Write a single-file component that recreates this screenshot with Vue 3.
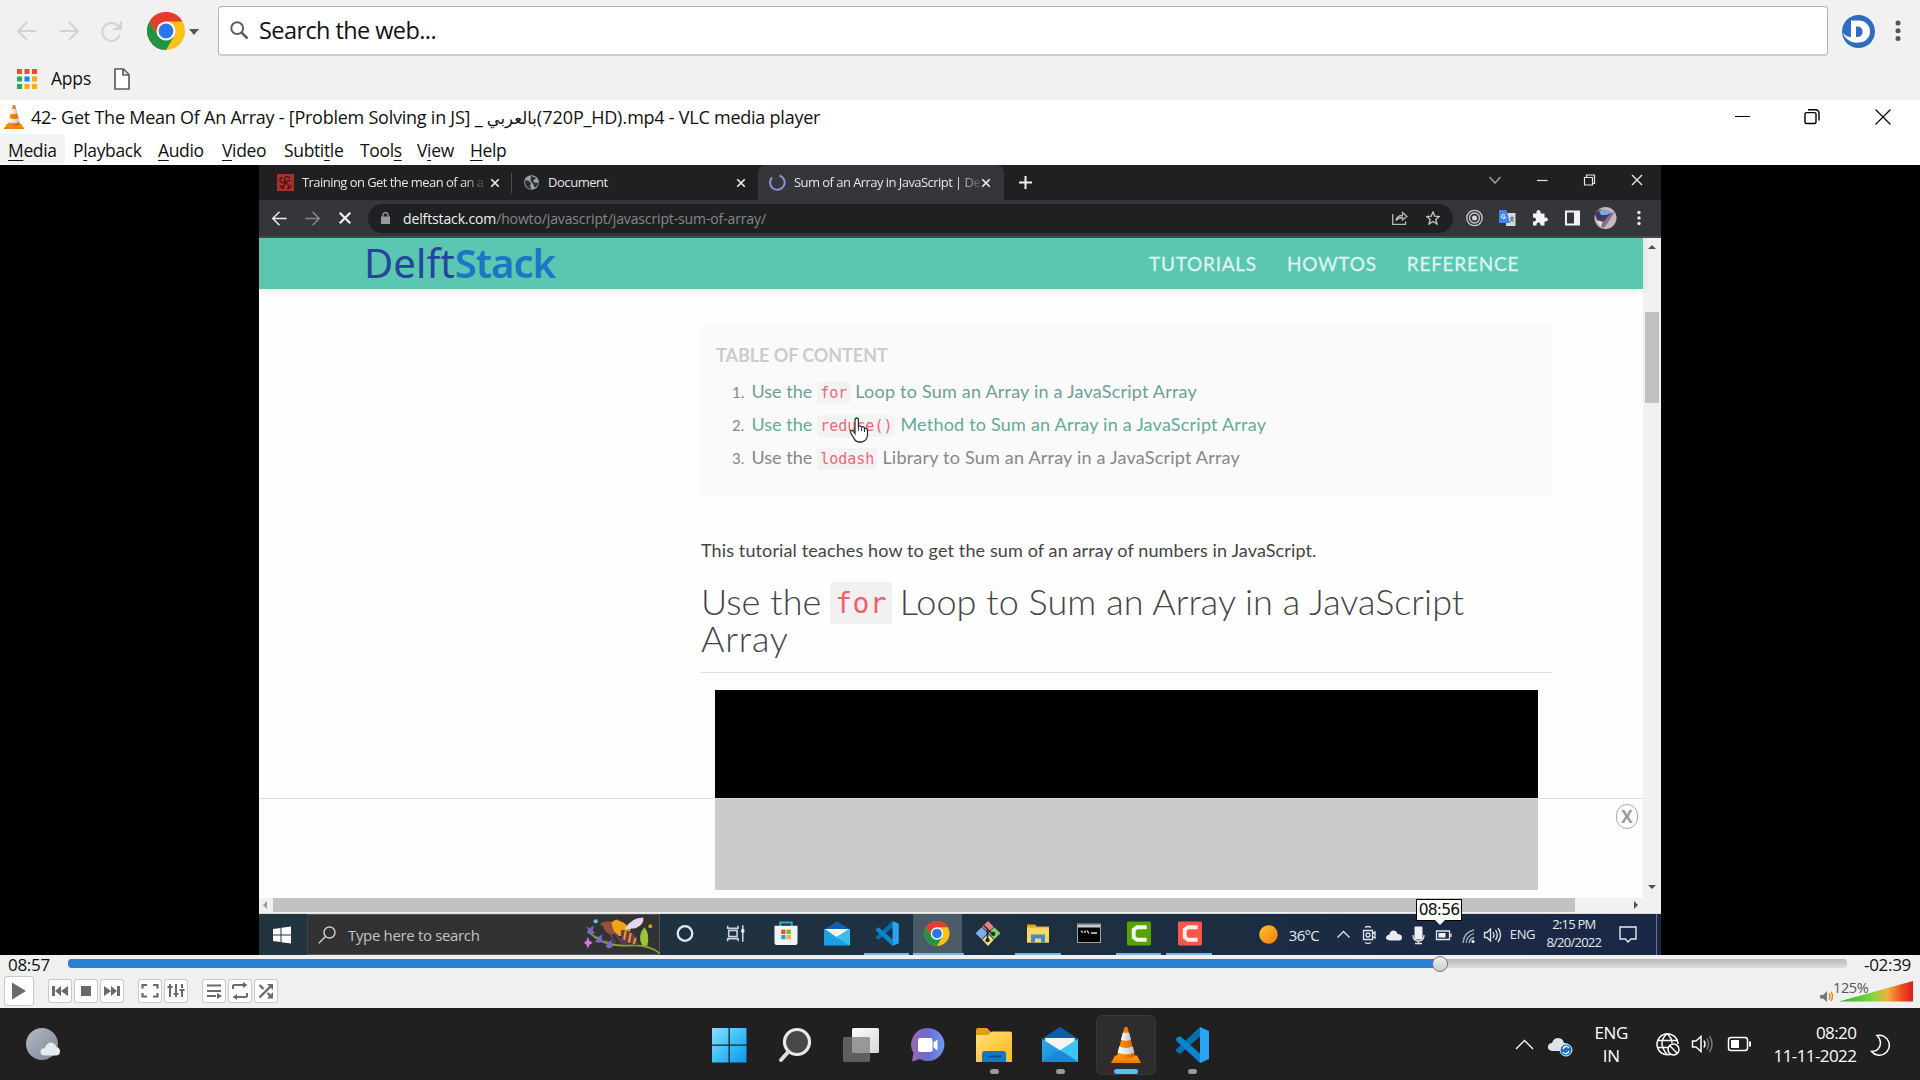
<script setup>
const menus = [
  ['', 'M', 'edia', 65], ['P', 'l', 'ayback', 85], ['', 'A', 'udio', 64], ['', 'V', 'ideo', 62],
  ['Subti', 't', 'le', 76], ['Tool', 's', '', 57], ['V', 'i', 'ew', 53], ['', 'H', 'elp', 60]
]
const toc = [
  { n: 1, code: 'for', tail: 'Loop to Sum an Array in a JavaScript Array', tone: 'seen' },
  { n: 2, code: 'reduce()', tail: 'Method to Sum an Array in a JavaScript Array', tone: 'hot' },
  { n: 3, code: 'lodash', tail: 'Library to Sum an Array in a JavaScript Array', tone: 'plain' }
]
const winApps = [
  { id: 'cortana' }, { id: 'tview' }, { id: 'store' }, { id: 'mail10' }, { id: 'vscode', on: 1 },
  { id: 'chrome', on: 1, active: 1 }, { id: 'git' }, { id: 'files10', on: 1 }, { id: 'cmd' },
  { id: 'camgreen', on: 1 }, { id: 'camred', on: 1 }
]
const dockApps = [
  { id: 'win11' }, { id: 'search11' }, { id: 'tview11' }, { id: 'chat' },
  { id: 'files11', on: 1 }, { id: 'mail11', on: 1 }, { id: 'cone', on: 1, active: 1 }, { id: 'vscode', on: 1 }
]
const played = 77.2
</script>

<template>
  <div class="screen">
    <svg class="defs" width="0" height="0" aria-hidden="true">
      <defs>
        <linearGradient id="gOrange" x1="0" x2="1"><stop offset="0" stop-color="#ff9a1f" /><stop offset=".5" stop-color="#f57c00" /><stop offset="1" stop-color="#d95f00" /></linearGradient>
        <linearGradient id="gWhite" x1="0" x2="1"><stop offset="0" stop-color="#fff" /><stop offset="1" stop-color="#bfc3c7" /></linearGradient>
        <linearGradient id="gWin" x1="0" y1="0" x2="1" y2="1" ><stop offset="0" stop-color="#8be0ff" /><stop offset=".5" stop-color="#3cc0fa" /><stop offset="1" stop-color="#0f94ee" /></linearGradient>
        <linearGradient id="gFold" x1="0" y1="0" x2="1" y2="1"><stop offset="0" stop-color="#ffe07a" /><stop offset="1" stop-color="#fbb91a" /></linearGradient>
        <linearGradient id="gChat" x1="0" y1="0" x2="1" y2="0"><stop offset="0" stop-color="#9a68b8" /><stop offset=".5" stop-color="#6b6bd0" /><stop offset="1" stop-color="#6f9aef" /></linearGradient>
        <linearGradient id="gMail" x1="0" y1="0" x2="1" y2="1"><stop offset="0" stop-color="#2fa9e6" /><stop offset="1" stop-color="#0f86dc" /></linearGradient>
        <linearGradient id="gMoon" x1="0" y1="0" x2="1" y2="1"><stop offset="0" stop-color="#b3bcc8" /><stop offset="1" stop-color="#7c848e" /></linearGradient>
        <linearGradient id="gSun" x1="0" y1="0" x2="1" y2="1"><stop offset="0" stop-color="#ffc62b" /><stop offset="1" stop-color="#ee7a10" /></linearGradient>
        <linearGradient id="gVol" x1="0" x2="1"><stop offset="0" stop-color="#2fae3a" /><stop offset=".45" stop-color="#7fd63e" /><stop offset=".65" stop-color="#f0b23c" /><stop offset=".85" stop-color="#ee4a22" /><stop offset="1" stop-color="#d8201c" /></linearGradient>
        <linearGradient id="gTv" x1="0" y1="0" x2="1" y2="1"><stop offset="0" stop-color="#fff" /><stop offset="1" stop-color="#d6d6d6" /></linearGradient>
      </defs>
      <symbol id="chrome" viewBox="0 0 38 38">
        <circle cx="19" cy="19" r="19" fill="#fbc116" />
        <path d="M2.500 9.500A19 19 0 0 1 35.500 9.500H19L10.800 23.700Z" fill="#e33b2e" />
        <path d="M2.500 9.500A19 19 0 0 0 19 38L27.200 23.700H10.800Z" fill="#229342" />
        <circle cx="19" cy="19" r="9.500" fill="#fff" /><circle cx="19" cy="19" r="7.400" fill="#2b76ee" />
      </symbol>
      <symbol id="cone" viewBox="0 0 28 34">
        <path d="M3.500 27H24.500L28 34H0Z" fill="#ff8f00" /><path d="M1 31.500H27L28 34H0Z" fill="#f57c00" />
        <path d="M12.600 0H15.400L22.500 27.500Q14 33 5.500 27.500Z" fill="url(#gOrange)" />
        <path d="M10.900 5.500H17.100L18.700 12Q14 14 9.300 12Z" fill="url(#gWhite)" />
        <path d="M7.600 18.500Q14 21 20.400 18.500L21.900 24Q14 28 6.100 24Z" fill="url(#gWhite)" />
      </symbol>
      <symbol id="vscode" viewBox="0 0 34 36">
        <path d="M25 9.500 5 27 1 24.500V22.500L25 0Z" fill="#0270ad" />
        <path d="M25 26.500 5 9 1 11.500V13.500L25 36Z" fill="#0a86d1" />
        <path d="M25 0 34 4V32L25 36Z" fill="#27a5f2" />
      </symbol>
      <symbol id="mail11" viewBox="0 0 34 34">
        <path d="M0 11 17 0 34 11V16H0Z" fill="#0a5cad" /><path d="M3 10.500H31V20L17 24 3 20Z" fill="#f4f4f4" />
        <path d="M0 11 34 33H0Z" fill="url(#gMail)" /><path d="M34 11V33L17 22Z" fill="#3cc4f2" /><path d="M0 33 17 22 34 33Z" fill="#1788dc" />
      </symbol>
      <symbol id="mail10" viewBox="0 0 26 24">
        <path d="M0 8 13 0 26 8Z" fill="#1260b4" /><path d="M0 7.500H26V24H0Z" fill="#1ba0e8" />
        <path d="M1 7.500H25L13 16Z" fill="#f5f5f0" /><path d="M26 7.500V24L12 15.500Z" fill="#37bff2" />
      </symbol>
      <symbol id="cortana" viewBox="0 0 24 24"><circle cx="12" cy="12" r="7" fill="none" stroke="#e3ebf0" stroke-width="2.200" /></symbol>
      <symbol id="tview" viewBox="0 0 24 24"><path d="M4 4.500V7H14V4.500M4 19.500V17H14V19.500M5 9H13V15H5ZM18.500 4V20" fill="none" stroke="#cdd5da" stroke-width="1.500" /><path d="M17 8h3v3h-3z" fill="#fff" /></symbol>
      <symbol id="store" viewBox="0 0 26 26"><path d="M7 7V1.500H19V7" fill="none" stroke="#2ea8e0" stroke-width="2" /><path d="M1 5H25V22Q25 25 22 25H4Q1 25 1 22Z" fill="#f3f3f3" /><path d="M8 9h4.500v4.500H8z" fill="#f04f24" /><path d="M13.500 9H18v4.500h-4.500z" fill="#78b818" /><path d="M8 14.500h4.500V19H8z" fill="#22a2e8" /><path d="M13.500 14.500H18V19h-4.500z" fill="#f5b50f" /></symbol>
      <symbol id="git" viewBox="0 0 26 26">
        <path d="M13 0 19 6 13 12 7 6Z" fill="#ee7f80" /><path d="M6.500 6.500 12.500 12.500 6.500 19 0 12.800Z" fill="#84a9ee" /><path d="M19.500 6.500 26 12.800 19.500 19 13.500 12.500Z" fill="#85cf62" /><path d="M13 13.500 19 19.500 13 26 7 19.500Z" fill="#f6dd80" />
        <path d="M9 5 18 14M12.500 9V20" stroke="#1c2b38" stroke-width="1.600" /><circle cx="12.500" cy="20" r="2.200" fill="#1c2b38" /><circle cx="18.500" cy="13.500" r="2.200" fill="#1c2b38" />
      </symbol>
      <symbol id="files10" viewBox="0 0 26 24"><path d="M2 3H10L12 5H24V21H2Z" fill="#e0a420" /><path d="M2 6H24V21H2Z" fill="#f9d765" /><path d="M6 13H20V21H16V17H10V21H6Z" fill="#3f8cc8" /></symbol>
      <symbol id="cmd" viewBox="0 0 26 24"><rect x="1.500" y="2.500" width="23" height="18.500" fill="#000" stroke="#9ba3a8" /><path d="M2 3H24V6H2Z" fill="#c9cdd0" /><path d="M5 9.500 7 11M9 9v2.500M11 9l2 3M15 11.500h6" stroke="#ddd" stroke-width="1.300" fill="none" /></symbol>
      <symbol id="camgreen" viewBox="0 0 26 26"><rect x=".5" y=".5" width="25" height="25" rx="1.500" fill="#57a300" /><path d="M21 6.500H11L7.500 9V17L11 19.500H21" fill="none" stroke="#f2f9ea" stroke-width="4" /></symbol>
      <symbol id="camred" viewBox="0 0 26 26"><rect x=".5" y=".5" width="25" height="25" rx="1.500" fill="#f8574a" /><path d="M21 6.500H11L7.500 9V17L11 19.500H21" fill="none" stroke="#fff0ee" stroke-width="4" /></symbol>
      <symbol id="win11" viewBox="0 0 36 36"><path d="M1 1H17.500V17.500H1ZM18.800 1H35.500V17.500H18.800ZM1 18.800H17.500V35.500H1ZM18.800 18.800H35.500V35.500H18.800Z" fill="url(#gWin)" /></symbol>
      <symbol id="search11" viewBox="0 0 34 36"><circle cx="19" cy="15" r="12.500" fill="#474747" stroke="#e9e9e9" stroke-width="3.200" /><path d="M10.500 24.500 3 33" stroke="#dcdcdc" stroke-width="4" stroke-linecap="round" /></symbol>
      <symbol id="tview11" viewBox="0 0 36 36"><rect x="9" y="1" width="27" height="25" rx="1.500" fill="url(#gTv)" /><rect x="0" y="10" width="27" height="25" rx="1.500" fill="#777" fill-opacity=".72" /></symbol>
      <symbol id="chat" viewBox="0 0 34 36"><path d="M17 1A16.500 16.500 0 1 1 9 32L1 34.500 2.500 26A16.500 16.500 0 0 1 17 1Z" fill="url(#gChat)" /><rect x="7" y="11" width="14.500" height="14" rx="2" fill="#fff" /><path d="M22.500 15.500 26.500 12.500V23.500L22.500 20.500Z" fill="#fff" /></symbol>
      <symbol id="files11" viewBox="0 0 36 34"><path d="M0 2Q0 0 2 0H11L15 4H34V14H0Z" fill="#e0a010" /><path d="M0 7H12L16 3.500H34Q36 3.500 36 5V34H0Z" fill="url(#gFold)" /><path d="M6 34V26Q6 23 9 23H27Q30 23 30 26V34Z" fill="#1277cc" /><path d="M11 28.500H25" stroke="#0a4f94" stroke-width="2" /></symbol>
      <symbol id="cross" viewBox="0 0 12 12"><path d="M1.500 1.500 10.500 10.500M10.500 1.500 1.500 10.500" stroke="currentColor" stroke-width="2" fill="none" /></symbol>
      <symbol id="left" viewBox="0 0 20 20"><path d="M19.500 10H1.500M10 1 1 10 10 19" stroke="currentColor" stroke-width="2" fill="none" /></symbol>
    </svg>

    <!-- browser frame -->
    <header class="browser">
      <div class="addr">
        <svg class="nav" width="20" height="20"><use href="#left" /></svg>
        <svg class="nav flip" width="20" height="20"><use href="#left" /></svg>
        <svg class="nav" width="21" height="21" viewBox="0 0 21 21"><path d="M17 4.800A9 9 0 1 0 19 13.500M20 0V8H12" fill="none" stroke="currentColor" stroke-width="2" /><path d="M20.500 1V8.500H13Z" fill="currentColor" /></svg>
        <svg class="engine" width="38" height="38"><use href="#chrome" /></svg>
        <i class="drop"></i>
        <div class="box">
          <svg width="19" height="19" viewBox="0 0 19 19"><circle cx="7.200" cy="7.200" r="5.900" fill="none" stroke="#5d5d5d" stroke-width="2" /><path d="M11.500 11.500 17.500 17.500" stroke="#5d5d5d" stroke-width="2.500" /></svg>
          <span>Search the web...</span>
        </div>
        <svg class="dlogo" width="33" height="33" viewBox="0 0 33 33"><circle cx="16.500" cy="16.500" r="16.500" fill="#2f6cc0" /><path d="M9 5.500H17A11 11 0 0 1 17 27.500C9 28.500 3 24 .5 17.500 3 20.500 6 22 9 22Z" fill="#fff" /><path d="M14 11.500H16A5.300 5.300 0 0 1 16 22H14Z" fill="#2f6cc0" /></svg>
        <svg class="more" width="6" height="22" viewBox="0 0 6 22"><circle cx="3" cy="3" r="2.500" /><circle cx="3" cy="10.700" r="2.500" /><circle cx="3" cy="18.400" r="2.500" /></svg>
      </div>
      <div class="marks">
        <svg width="20" height="20" viewBox="0 0 20 20"><path d="M0 0h5v5H0zM7.500 0h5v5h-5zM15 0h5v5h-5z" fill="#fb4437" /><path d="M0 7.500h5v5H0zM0 15h5v5H0z" fill="#2da55b" /><path d="M7.500 7.500h5v5h-5z" fill="#1b82f5" /><path d="M15 7.500h5v5h-5zM7.500 15h5v5h-5zM15 15h5v5h-5z" fill="#fbab07" /></svg>
        <span>Apps</span>
        <svg width="16" height="22" viewBox="0 0 16 22"><path d="M1 1H9.500L15 6.500V21H1ZM9 1V7H15" fill="#fff" stroke="#5f5f5f" stroke-width="1.700" /></svg>
      </div>
    </header>

    <!-- VLC window -->
    <section class="vlc">
      <div class="title">
        <svg width="20" height="24" viewBox="0 0 28 34" preserveAspectRatio="none"><use href="#cone" /></svg>
        <span class="tname">42- Get The Mean Of An Array - [Problem Solving in JS] _ <bdi class="ar">بالعربي</bdi>(720P_HD).mp4 - VLC media player</span>
        <svg class="wbtn" width="156" height="16" viewBox="0 0 156 16" fill="none" stroke="#000"><path d="M0 7.500H15" /><path d="M71.500 3.600H79.500Q81 3.600 81 5V13Q81 14.500 79.500 14.500H71.500Q70 14.500 70 13V5Q70 3.600 71.500 3.600ZM73 .7H80.500Q84 .7 84 4.500V11.500" stroke-width="1.400" /><path d="M140.500 .5 155.500 15.500M155.500 .5 140.500 15.500" stroke-width="1.200" /></svg>
      </div>
      <nav class="menu">
        <span v-for="(m, i) in menus" :key="i" :style="{ width: m[3] + 'px' }">{{ m[0] }}<u>{{ m[1] }}</u>{{ m[2] }}</span>
      </nav>
      <div class="stage">
        <div class="video">
          <div class="tabs">
            <div class="tab t1">
              <svg width="17" height="17" viewBox="0 0 17 17"><path d="M0 0h17v17H0z" fill="#a8322a" /><path d="M8.500 8.500Q6 4 9 2.500M8.500 8.500Q12 5 14 7M8.500 8.500Q13 11 11.500 14M8.500 8.500Q7 13.500 4 13M8.500 8.500Q3.500 9.500 3 6M5 3Q2.500 5 3 8M13 4Q10 2 8 3M14.500 11Q14 14 10 15M3 11Q3.500 14 7 15" stroke="#4b1010" stroke-width="1.200" fill="none" /></svg>
              <span class="fade">Training on Get the mean of an a</span>
              <svg class="x" width="10" height="10"><use href="#cross" /></svg>
            </div>
            <div class="tab t2">
              <svg width="15" height="15" viewBox="0 0 15 15"><circle cx="7.500" cy="7.500" r="7.300" fill="#9fa2a6" /><path d="M1.500 5 5 6 7 8.500 6 11 7.500 14.500Q2 13 1 8ZM7 1 12.500 3 9 5.500 11 8 14 7.500Q14 11 10.500 12.500L9.500 9.500 6.500 5.500Z" fill="#2c2d30" /></svg>
              <span>Document</span>
              <svg class="x" width="10" height="10"><use href="#cross" /></svg>
            </div>
            <div class="tab t3">
              <svg width="17" height="17" viewBox="0 0 17 17"><path d="M10.500 1.500A7.300 7.300 0 1 1 3 3.500" fill="none" stroke="#8794d8" stroke-width="2" /></svg>
              <span class="fade">Sum of an Array in JavaScript | De</span>
              <svg class="x" width="10" height="10"><use href="#cross" /></svg>
            </div>
            <svg class="plus" width="13" height="13" viewBox="0 0 13 13"><path d="M6.500 0V13M0 6.500H13" stroke="#f2f2f2" stroke-width="2" /></svg>
            <svg class="vwin" width="154" height="12" viewBox="0 0 154 12" fill="none" stroke="#e6e6e6" stroke-width="1.200"><path d="M.5 3 6 9 11.500 3" stroke="#aaa" /><path d="M48 6.500H58.500" /><path d="M95.500 3.500H103.500V11H95.500ZM97.500 3V1H105.500V9.500H104" /><path d="M143 1 153 11M153 1 143 11" stroke-width="1.400" /></svg>
          </div>
          <div class="tools">
            <svg class="w" width="15" height="15"><use href="#left" /></svg>
            <svg class="g flip" width="15" height="15"><use href="#left" /></svg>
            <svg class="w" width="14" height="14"><use href="#cross" /></svg>
            <div class="pill">
              <svg width="9" height="12" viewBox="0 0 9 12"><path d="M0 4.500h9V12H0z" fill="#97999c" /><path d="M2 5V2.800a2.500 2.200 0 0 1 5 0V5" fill="none" stroke="#97999c" stroke-width="1.300" /></svg>
              <span class="url"><b>delftstack.com</b>/howto/javascript/javascript-sum-of-array/</span>
              <svg class="share" width="16" height="14" viewBox="0 0 16 14" fill="none" stroke="#b4b6b8" stroke-width="1.300"><path d="M.7 3V13.300H13.500V10.500M4 9.500Q5 4.500 10.500 4.500V1.500L15 5.500 10.500 9V6.500Q6.500 6.500 4 9.500Z" /></svg>
              <svg width="14" height="14" viewBox="0 0 14 14" fill="none" stroke="#c4c6c8" stroke-width="1.300"><path d="M7 1 8.800 5.200 13.300 5.500 9.800 8.500 11 13 7 10.500 3 13 4.200 8.500 .7 5.500 5.200 5.200Z" /></svg>
            </div>
            <svg class="ext" width="152" height="24" viewBox="0 0 152 24">
              <g fill="none" stroke="#c8c9cb" stroke-width="1.300"><circle cx="8.500" cy="12" r="7.700" /><circle cx="8.500" cy="12" r="5" /></g><circle cx="8.500" cy="12" r="2.500" fill="#d5d5d5" />
              <path d="M40 7h9.500v13H40z" fill="#d6d8dc" /><path d="M33 4H40.500L44 17H33Z" fill="#4285f4" /><path d="M44 12h4M46 10.500v1.500M44 16l3.500-4M44.500 12.500l3.500 3.500" stroke="#5f6368" fill="none" /><path d="M39 9a2 2 0 1 0 .5 2H37.500" fill="none" stroke="#fff" />
              <path d="M67 7.500H70.500Q70 4 72.500 4T74.500 7.500H78.500V11.500Q82 11 82 13.500T78.500 15.500V19.500H74.500Q74.500 16.500 72.500 16.500T70.500 19.500H67V15.500Q70 15.500 70 13.500T67 11.500Z" fill="#f1f3f4" />
              <path d="M99 4.500h15v15H99z" fill="#f1f3f4" /><path d="M101 6.500h7v11h-7z" fill="#35363a" />
              <circle cx="139.500" cy="12" r="11" fill="#c5b9bd" /><path d="M129 8Q133 2 137 4L146 8 143 13 138 16 131 14Z" fill="#43385f" /><path d="M133 5 138 3 146 6 141 9 135 9Z" fill="#7fa8dc" /><path d="M143 9 149 5 143 15 138 22 134 20Z" fill="#85708c" /><path d="M131 15 136 16 135 21Z" fill="#eee3dc" />
            </svg>
            <svg width="4" height="16" viewBox="0 0 4 16" fill="#e9eaeb"><circle cx="2" cy="2.500" r="1.700" /><circle cx="2" cy="8" r="1.700" /><circle cx="2" cy="13.500" r="1.700" /></svg>
          </div>

          <div class="view">
            <div class="page">
              <div class="top">
                <div class="logo"><span>Delft</span><b>Stack</b></div>
                <span class="n1">TUTORIALS</span><span class="n2">HOWTOS</span><span class="n3">REFERENCE</span>
              </div>
              <article>
                <div class="toc">
                  <h5>TABLE OF CONTENT</h5>
                  <p v-for="r in toc" :key="r.n" :class="r.tone"><i>{{ r.n }}.</i><span class="pre">Use the</span><code>{{ r.code }}</code><span class="tail">{{ r.tail }}</span></p>
                  <svg class="hand" width="20" height="26" viewBox="0 0 20 26"><path d="M6 15V3Q6 1 7.700 1T9.400 3V10Q9.500 8.600 11 8.800T12.500 10.500Q13 9.500 14.300 9.800T15.500 11.500Q16.500 10.800 17.500 11.500T18.500 13.500V18Q18 24.500 12 25H10Q6 24.500 4.500 20.500L1.500 15.500Q1 13.800 2.500 13.500T6 16.500Z" fill="#fff" stroke="#333" stroke-width="1.300" /><path d="M9.400 10V14M12.500 11V14M15.500 12V15" stroke="#333" /></svg>
                </div>
                <p class="lead">This tutorial teaches how to get the sum of an array of numbers in JavaScript.</p>
                <div class="h2"><div class="hl"><span>Use the</span><code>for</code><span>Loop to Sum an Array in a JavaScript</span></div><span class="l2">Array</span></div>
                <div class="player"></div>
              </article>
              <div class="ad"><div class="adbox"></div><span class="adx">X</span></div>
            </div>
            <div class="vbar"><i class="up"></i><div class="thumb"></div><i class="down"></i></div>
          </div>
          <div class="hbar"><i class="lt"></i><div></div><i class="rt"></i></div>

          <div class="win10">
            <div class="start"><svg width="18" height="18" viewBox="0 0 18 18"><path d="M0 3 7.500 2V8.500H0ZM8.500 1.800 18 .5V8.500H8.500ZM0 9.500H7.500V16L0 15ZM8.500 9.500H18V17.500L8.500 16.200Z" fill="#fff" /></svg></div>
            <div class="find">
              <svg width="18" height="18" viewBox="0 0 18 18" fill="none" stroke="#d0d0d0" stroke-width="1.400"><circle cx="11.500" cy="6.500" r="5.500" /><path d="M7.500 10.500 .8 17.200" /></svg>
              <span>Type here to search</span>
              <svg class="bee" width="76" height="38" viewBox="0 0 78 38">
                <path d="M4 14Q16 30 44 30 66 28 78 38" fill="none" stroke="#83a33c" stroke-width="1.800" /><path d="M60 30Q54 20 62 11 68 18 65 30Z" fill="#9cc53c" />
                <path d="M2 10 6 12 10 9 9 15 12 17 6 18 3 17 5 14ZM12 19 15 21 19 18 18 23 21 26 15 27 11 26 14 23ZM22 24 25 26 29 24 28 28 30 31 25 33 22 30 24 28Z" fill="#7768c8" />
                <path d="M4 21 5.500 25 9 27 5.500 29 4 33 2.500 29 0 27 2.500 25Z" fill="#d677ee" />
                <path d="M16 8Q22 3 30 6L36 16 28 19Q20 16 20 10Z" fill="#94513c" /><path d="M28 6 33 3 40 6 48 12 46 20H36Q30 16 29 10Z" fill="#eba516" /><path d="M38 14Q54 13 55 30L46 27Q36 24 38 14Z" fill="#6c3b55" /><path d="M43 14 41 24M48 17 46 27M53 22 51 28" stroke="#e39a20" stroke-width="2.200" />
                <path d="M27 18 32 27M32 18 40 28M38 22 44 29" stroke="#6c3b55" stroke-width="2" fill="none" /><path d="M42 13Q48 1 61 1 62 8 53 12Z" fill="#e1d6ea" /><circle cx="12" cy="5" r="2.200" fill="#5cc8d6" /><circle cx="68" cy="10" r="2" fill="#e69c12" />
              </svg>
            </div>
            <div class="apps"><div v-for="a in winApps" :key="a.id" :class="{ on: a.on, active: a.active }"><svg width="26" height="25"><use :href="'#' + a.id" /></svg></div></div>
            <svg class="sun" width="19" height="19" viewBox="0 0 19 19"><circle cx="9.500" cy="9.500" r="9.300" fill="url(#gSun)" /></svg>
            <span class="deg">36°C</span>
            <svg class="tray" width="166" height="20" viewBox="0 0 166 20" fill="none" stroke="#dfe5ea" stroke-width="1.300">
              <path d="M.5 12.500 6.500 6.500 12.500 12.500" /><path d="M26.500 5.500H35.500V14.500H26.500ZM35.500 8.500 38 7V13L35.500 11.500M28 2.500Q31 .5 34 2.500M28 17.500Q31 19.500 34 17.500" /><circle cx="31" cy="10" r="2" />
              <path d="M53 15.500Q48.500 15 49 12 50 9.500 52.500 9.500 53 5.500 57 5.500 60 6 60.500 9 65 9 65 12.500 65 15 62.500 15.500Z" fill="#e9edf1" stroke="none" />
              <rect x="77.500" y="1.500" width="8" height="13" rx="1" fill="#eef1f4" stroke="none" /><path d="M76 10Q76 16 81.500 16T87 10M81.500 16V18.500M78 18.500H85" />
              <path d="M99.500 6H112.500V14.500H99.500ZM114 8.500V12" /><path d="M101.500 8h7v4.500h-7z" fill="#eef1f4" stroke="none" />
              <path d="M126 18Q127 7 137 5M129 18Q130 10.500 137 8.500M132 18Q133 13.500 137 12.500" stroke="#aab4be" /><circle cx="136" cy="16.500" r="1.500" fill="#fff" stroke="none" />
              <path d="M147.500 7.500H150L153.500 4V16L150 12.500H147.500ZM156 7Q158 10 156 13M158.500 5Q162 10 158.500 15M161 3Q166 10 161 17" />
            </svg>
            <span class="lang10">ENG</span>
            <div class="clock10"><span>2:15 PM</span><span>8/20/2022</span></div>
            <svg class="note" width="18" height="17" viewBox="0 0 18 17" fill="none" stroke="#e6ebef" stroke-width="1.400"><path d="M1 1H17V13H12L9 16 6.500 13H1Z" /></svg>
            <i class="peek"></i>
          </div>
        </div>
        <div class="tip">08:56</div>
      </div>
      <div class="ctl">
        <div class="seek">
          <span class="el">08:57</span>
          <div class="track"><div class="fill" :style="{ width: played + '%' }"></div></div>
          <span class="rem">-02:39</span>
        </div>
        <div class="btns">
          <button class="play"><svg width="30" height="30" viewBox="0 0 30 30"><path d="M8 6.500 22 15 8 23.500Z" fill="#6a6a6a" /></svg></button>
          <button><svg width="24" height="24" viewBox="0 0 24 24" fill="#6a6a6a"><path d="M4 7h3v10H4zM7 12 13 7V17ZM13 12 20 7V17Z" /></svg></button>
          <button><svg width="24" height="24" viewBox="0 0 24 24" fill="#6a6a6a"><path d="M7 7h10v10H7z" /></svg></button>
          <button><svg width="24" height="24" viewBox="0 0 24 24" fill="#6a6a6a"><path d="M17 7h3v10h-3zM17 12 11 7V17ZM11 12 4 7V17Z" /></svg></button>
          <button class="sp"><svg width="24" height="24" viewBox="0 0 24 24" fill="none" stroke="#6a6a6a" stroke-width="2.200"><path d="M4.500 9.500V6H9M15 6H19.500V9.500M19.500 14V17.500H15M9 17.500H4.500V14" /></svg></button>
          <button><svg width="24" height="24" viewBox="0 0 24 24" fill="none" stroke="#6a6a6a" stroke-width="2"><path d="M6 5V7M6 9V18M12 5V14M12 16V18M18 5V9M18 12V18M3.500 8H8.500M9.500 15H14.500M15.500 11H20.500" /></svg></button>
          <button class="sp"><svg width="24" height="24" viewBox="0 0 24 24" fill="none" stroke="#6a6a6a" stroke-width="2.200"><path d="M5 6.500H19M5 12H19M5 17H14" /><path d="M15 14 20 17 15 20Z" fill="#6a6a6a" stroke="none" /></svg></button>
          <button><svg width="24" height="24" viewBox="0 0 24 24" fill="none" stroke="#6a6a6a" stroke-width="2"><path d="M5 10V7Q5 6 6 6H17M19 14V17Q19 18 18 18H7" /><path d="M15 3 19.500 6 15 9ZM9 15 4.500 18 9 21Z" fill="#6a6a6a" stroke="none" /></svg></button>
          <button><svg width="24" height="24" viewBox="0 0 24 24" fill="none" stroke="#6a6a6a" stroke-width="2.400"><path d="M5.500 18.500 17 7M5.500 6 9.500 10M13.500 14 17 17.500" /><path d="M13 5H19V11ZM19 13V19.500H13Z" fill="#6a6a6a" stroke="none" /></svg></button>
          <svg class="vol" width="94" height="26" viewBox="0 0 94 26">
            <path d="M1 17H4L8 13V24L4 20.500H1Z" fill="#777" /><path d="M10 15.500Q12 18.500 10 21.500M12 14Q15 18.500 12 23" fill="none" stroke="#f08a1c" stroke-width="1.600" />
            <path d="M20 23.500 94 3V23.500Z" fill="url(#gVol)" /><text x="14" y="15" class="pct">125%</text>
          </svg>
        </div>
      </div>
    </section>

    <!-- system taskbar -->
    <footer class="dock">
      <svg class="wx" width="36" height="34" viewBox="0 0 36 34"><circle cx="16" cy="16" r="16" fill="url(#gMoon)" /><path d="M18.500 27.500Q14 27 14.500 23 15.500 20 19 20 20 15 25 14.500 29.500 15 30.500 19 34 19.500 34 23.500 34 27 30.500 27.500Z" fill="#e6eaee" /></svg>
      <div class="dapps"><div v-for="a in dockApps" :key="a.id" :class="{ on: a.on, active: a.active }"><svg width="36" height="36"><use :href="'#' + a.id" /></svg></div></div>
      <svg class="dt1" width="60" height="24" viewBox="0 0 60 24" fill="none" stroke="#fff" stroke-width="1.500"><path d="M1 16 9.500 7.500 18 16" stroke-width="1.300" /><path d="M37 18Q32 17 33 13 34 10 37 10 38.500 5 43.500 5 48 5.500 49 10 53.500 10 54 14V18Z" fill="#dfe3e8" stroke="none" /><circle cx="51" cy="17" r="6" fill="#1b73c8" stroke="#e9f2fb" stroke-width="1" /><path d="M48 16A3.300 3.300 0 0 1 54 15M54 18A3.300 3.300 0 0 1 48 19" stroke-width="1.300" /></svg>
      <div class="dlang"><span>ENG</span><span>IN</span></div>
      <svg class="dt2" width="98" height="26" viewBox="0 0 98 26" fill="none" stroke="#fff" stroke-width="1.500">
        <path d="M17.500 22.500A10.500 10.500 0 1 1 23 13M2 9.500H22M2 16.500H13M12 2.500Q6.500 8 7 13T12 23.500M12 2.500Q17 7 17 12" /><circle cx="18.500" cy="18.500" r="5.500" fill="#202020" /><path d="M14.800 14.800 22.200 22.200" />
        <path d="M37.500 10H41L46 5.500V20.500L41 16H37.500Z" /><path d="M49 9.500Q51 13 49 16.500" /><path d="M52 7.500Q55 13 52 18.500M54.500 5Q59.500 13 54.500 21" stroke="#777" />
        <rect x="73.500" y="6.500" width="19" height="13" rx="2.500" /><rect x="76" y="9" width="8" height="8" fill="#fff" stroke="none" /><path d="M95 10.500V15.500" stroke-width="2" />
      </svg>
      <div class="dclock"><span>08:20</span><span>11-11-2022</span></div>
      <svg class="moon" width="20" height="22" viewBox="0 0 20 22"><path d="M7 1.500A10 10 0 1 1 1.500 17.500Q10 17 10.500 9 10 4 7 1.500Z" fill="none" stroke="#fff" stroke-width="1.500" /></svg>
    </footer>
  </div>
</template>

<style>
body { margin: 0; background: #000; overflow: hidden; }
</style>

<style scoped>
.screen { width: 1920px; height: 1080px; display: flex; flex-direction: column; overflow: hidden; font-family: "Open Sans", "Noto Sans", sans-serif; color: #111; position: relative; }
.screen * { box-sizing: border-box; }
.defs { position: absolute; }
svg { display: block; flex: none; }
span, b { white-space: nowrap; }
.flip { transform: scaleX(-1); }

.browser { height: 100px; background: #f1f1f1; flex: none; }
.addr { height: 62px; display: flex; align-items: center; padding-left: 17px; }
.nav { color: #d3d3d3; margin-right: 22px; }
.nav + .nav + .nav { margin-right: 25px; }
.drop { border: 5.500px solid transparent; border-top: 6px solid #555; border-bottom: 0; margin: 1px 19px 0 4px; }
.box { width: 1610px; height: 50px; background: #fff; border: 1px solid #b3b3b3; border-bottom: 2px solid #ccc; border-radius: 4px; display: flex; align-items: center; padding-left: 11px; font-size: 23.500px; letter-spacing: -.58px; }
.box svg { margin-top: -1px; }
.box span { margin: -2px 0 0 10px; }
.dlogo { margin-left: 14px; }
.more { margin-left: 20px; fill: #555; }
.marks { height: 33px; display: flex; align-items: center; padding-left: 17px; font-size: 17.500px; letter-spacing: -.2px; }
.marks span { margin: -2px 23px 0 14px; }

.vlc { height: 908px; display: flex; flex-direction: column; background: #fff; flex: none; }
.title { height: 33px; display: flex; align-items: center; padding: 1px 29px 0 4px; font-size: 18px; letter-spacing: -.24px; }
.title > svg:first-child { margin-top: -1px; }
.tname { margin: 0 0 0 7px; }
.ar { font-family: "DejaVu Sans", sans-serif; font-size: 16.500px; letter-spacing: 0; }
.wbtn { margin-left: auto; margin-top: -1px; }
.menu { height: 32px; display: flex; font-size: 17.500px; letter-spacing: -.35px; line-height: 35px; }
.menu span { padding-left: 8px; }
.menu span:first-child { background: #f3f3f3; border-radius: 3px; height: 30px; margin-top: 1px; line-height: 33px; }
.menu u { text-underline-offset: 3px; text-decoration-thickness: 1px; }
.stage { height: 790px; background: #000; position: relative; padding-left: 259px; }
.video { width: 1402px; height: 790px; display: flex; flex-direction: column; background: #fff; }

.tabs { height: 35px; background: #1f2021; display: flex; align-items: center; color: #e4e5e7; font-size: 13px; font-weight: 500; letter-spacing: -.55px; padding-left: 18px; flex: none; }
.tab { display: flex; align-items: center; height: 35px; }
.tab span { margin: -2px 0 0 8px; }
.tab .x { margin-left: auto; color: #eee; }
.fade { -webkit-mask-image: linear-gradient(90deg, #000 88%, rgba(0, 0, 0, .15)); mask-image: linear-gradient(90deg, #000 88%, rgba(0, 0, 0, .15)); }
.t1 { width: 234px; padding-right: 11px; }
.t1::after { content: ""; width: 1px; height: 20px; background: #4a4c50; margin: 0 -12px 0 11px; }
.t2 { width: 247px; padding: 0 12px 0 13px; }
.t2 span { margin-left: 9px; letter-spacing: -.45px; }
.t3 { width: 246px; background: #35363a; border-radius: 8px 8px 0 0; padding: 0 13px 0 11px; }
.plus { margin-left: 15px; }
.vwin { margin-left: auto; margin-right: 18px; margin-top: -6px; }
.tools { height: 38px; background: #35363a; display: flex; align-items: center; padding: 0 20px 0 13px; flex: none; border-bottom: 2px solid #47494d; }
.w { color: #eee; margin-right: 18px; }
.g { color: #85878a; margin-right: 18px; }
.pill { margin-left: -2px; width: 1085px; height: 29px; border-radius: 15px; background: #1f2022; display: flex; align-items: center; padding: 0 13px; font-size: 14px; color: #85878a; }
.pill .url { margin-left: 13px; letter-spacing: -.13px; }
.pill b { color: #f0f0f0; font-weight: 500; }
.share { margin-left: auto; margin-right: 18px; }
.ext { margin-left: 13px; margin-right: auto; }

.view { height: 660px; display: flex; flex: none; }
.page { width: 1384px; display: flex; flex-direction: column; position: relative; background: #fefefe; }
.top { height: 51px; background: #5bc6b1; display: flex; align-items: center; flex: none; padding-left: 105px; font-family: Lato, sans-serif; font-size: 19px; color: #dcf5ef; box-shadow: 0 2px 8px rgba(0, 0, 0, .1); letter-spacing: .75px; -webkit-text-stroke: .3px #dcf5ef; }
.logo { font-family: "Noto Sans", sans-serif; font-size: 40px; line-height: 48px; letter-spacing: .1px; width: 785px; color: #25449b; margin-top: -2px; -webkit-text-stroke: 0; }
.logo b { color: #1c76c4; letter-spacing: -1px; font-weight: 600; }
.n2 { margin-left: 30px; }
.n3 { margin-left: 30px; }
article { padding: 36px 0 0 442px; width: 1293px; font-family: Lato, sans-serif; }
.toc { height: 171px; background: #fafafa; padding: 14px 0 0 15px; position: relative; }
h5 { margin: 0 0 3px; font-size: 18px; line-height: 32px; color: #ccc; font-weight: 700; letter-spacing: -.05px; }
.toc p { margin: 0; height: 33px; display: flex; align-items: center; font-size: 18px; color: #858788; }
.toc p.seen { color: #6f9f96; }
.toc p.hot { color: #63ab98; }
.toc i { font-style: normal; font-size: 15px; width: 35.500px; padding-left: 16px; color: #888; padding-top: 2px; }
.toc code { font: 15px "DejaVu Sans Mono", monospace; color: #ee6677; background: #f3f3f3; border-radius: 3px; padding: 2px 3px; margin: 4px 5px 0; }
.tail { letter-spacing: .21px; }
.hand { position: absolute; left: 148px; top: 92px; }
.lead { margin: 42px 0 0; font-size: 18px; letter-spacing: .12px; line-height: 24px; color: #444; white-space: nowrap; }
.h2 { margin-top: 21px; font-size: 36px; font-weight: 300; line-height: 37px; color: #444; height: 90px; border-bottom: 1px solid #ddd; display: flex; flex-direction: column; }
.hl { display: flex; align-items: center; height: 37px; letter-spacing: .05px; }
.h2 code { font: 28px/32px "DejaVu Sans Mono", monospace; letter-spacing: .3px; color: #f2606c; background: #f1f1f1; border-radius: 3px; padding: 6px 5px 4px; margin: 3px 8px 0 9px; }
.l2 { letter-spacing: .8px; }
.player { margin: 17px 14px 0; height: 112px; background: #000; }
.ad { position: absolute; left: 0; right: 0; bottom: 0; height: 100px; border-top: 1px solid #ddd; background: #fdfdfd; display: flex; padding-left: 456px; }
.adbox { width: 823px; height: 91px; background: #cbcbcb; }
.adx { margin: 5px 0 0 78px; width: 22px; height: 25px; border: 1px solid #aaa; border-radius: 11px; text-align: center; font: 700 17px/23px "Open Sans", sans-serif; color: #999; }
.vbar { width: 18px; background: #f1f1f1; display: flex; flex-direction: column; align-items: center; padding: 7px 1px 9px 0; }
.vbar i { border: 4px solid transparent; }
.vbar .up { border-bottom: 4px solid #505050; border-top: 0; }
.vbar .down { border-top: 4px solid #505050; border-bottom: 0; margin-top: auto; }
.thumb { width: 14px; height: 91px; background: #c1c1c1; margin-top: 63px; }
.hbar { height: 16px; background: #f1f1f1; display: flex; align-items: center; flex: none; padding: 0 23px 1px 4px; border-bottom: 1px solid #ddd; }
.hbar div { width: 1302px; height: 14px; background: #c2c2c2; margin-left: 6px; }
.hbar i { border: 4px solid transparent; }
.hbar .lt { border-right: 4px solid #999; border-left: 0; }
.hbar .rt { border-left: 4px solid #505050; border-right: 0; margin-left: auto; }

.win10 { height: 41px; display: flex; align-items: center; background: linear-gradient(90deg, #22343d, #1d3040 55%, #1a2746); color: #e3e8ec; }
.start { width: 48px; padding-left: 14px; }
.find { width: 353px; height: 41px; background: #323232; border: 1px solid #555; border-left-color: #444; display: flex; align-items: center; padding-left: 10px; color: #c4c4c4; font-size: 15px; letter-spacing: -.34px; }
.find span { margin: 0 0 0 12px; }
.bee { margin-left: auto; margin-right: -1px; }
.apps { display: flex; height: 41px; margin-left: 1px; }
.apps div { width: 50.450px; height: 41px; display: grid; place-items: center; border-bottom: 2px solid transparent; padding-right: 2px; }
.apps .on { border-image: linear-gradient(90deg, transparent 6%, #76b9ed 6% 88%, transparent 88%) 2; border-bottom-width: 2px; border-top: 0; border-left: 0; border-right: 0; }
.apps .active { background: linear-gradient(90deg, #4a5b66 97%, transparent 97%); border-image: linear-gradient(90deg, #76b9ed 97%, transparent 97%) 2; }
.sun { margin-left: 43px; }
.deg { margin-left: 11px; font-size: 15px; letter-spacing: -.7px; width: 48px; }
.lang10 { font-size: 13px; margin-left: 7px; letter-spacing: -.4px; width: 36px; margin-top: -1px; }
.clock10 { display: flex; flex-direction: column; align-items: center; font-size: 13px; line-height: 18px; letter-spacing: -.75px; width: 56px; margin-top: -3px; }
.note { margin-left: 17px; }
.peek { width: 1px; height: 41px; background: #66718a; margin-left: auto; margin-right: 4px; }
.tip { position: absolute; left: 1416px; top: 734px; width: 46px; height: 22px; border: 1px solid #000; background: #fff; font: 15.500px/21px "DejaVu Sans", sans-serif; letter-spacing: -.8px; text-align: center; }
.tip::after { content: ""; position: absolute; left: 18px; top: 20px; border: 5px solid transparent; border-top-color: #fff; border-bottom: 0; }

.ctl { height: 53px; background: #f0f0f0; flex: none; }
.seek { height: 19px; display: flex; align-items: center; font-size: 17px; letter-spacing: -.3px; padding-left: 8px; }
.el { width: 60px; line-height: 19px; }
.rem { margin-left: 17px; line-height: 19px; letter-spacing: -.3px; }
.track { width: 1779px; height: 9px; margin-top: -2px; background: linear-gradient(#b8b8b8, #dedede); border-radius: 4px; }
.fill { height: 9px; background: #2a80d2; border-radius: 4px 0 0 4px; position: relative; }
.fill::after { content: ""; position: absolute; right: -7px; top: -3.500px; width: 14px; height: 14px; border-radius: 50%; border: 1px solid #777; background: linear-gradient(#f2f2f2, #ccc); }
.btns { display: flex; align-items: center; padding-left: 4px; height: 34px; }
button { width: 24px; height: 24px; padding: 0; margin: 0 2px 0 0; border: 0; background: #fdfdfd; border-radius: 3px; box-shadow: 0 0 0 1px #c9c9c9 inset; }
.play { width: 30px; height: 30px; margin-right: 14px; }
.sp { margin-left: 12px; }
.vol { margin-left: auto; margin-right: 7px; }
.pct { font: 14.500px "Open Sans", sans-serif; letter-spacing: -.4px; fill: #555; }

.dock { height: 72px; background: #202020; display: flex; align-items: center; padding: 2px 0 0 26px; color: #fff; flex: none; }
.dapps { display: flex; margin-left: 637px; gap: 6.200px; }
.dapps div { width: 60px; height: 60px; border-radius: 6px; display: grid; place-items: center; position: relative; border: 1px solid transparent; }
.dapps .active { background: #2d2d2d; border-color: #383838; }
.dapps .on::after { content: ""; position: absolute; bottom: 0; left: 25px; width: 9px; height: 5px; border-radius: 3px; background: #9a9a9a; }
.dapps .active::after { left: 17px; width: 24px; background: #4cc2ff; }
.dt1 { margin-left: 293px; }
.dlang, .dclock { display: flex; flex-direction: column; font-size: 17px; line-height: 23px; letter-spacing: -.3px; margin-top: -3px; }
.dlang { width: 40px; align-items: center; margin-left: 16px; }
.dt2 { margin-left: 24px; margin-top: -2px; }
.dclock { width: 87px; margin-left: 16px; align-items: flex-end; letter-spacing: -.6px; }
.moon { margin-left: 14px; margin-top: -1px; }
</style>
